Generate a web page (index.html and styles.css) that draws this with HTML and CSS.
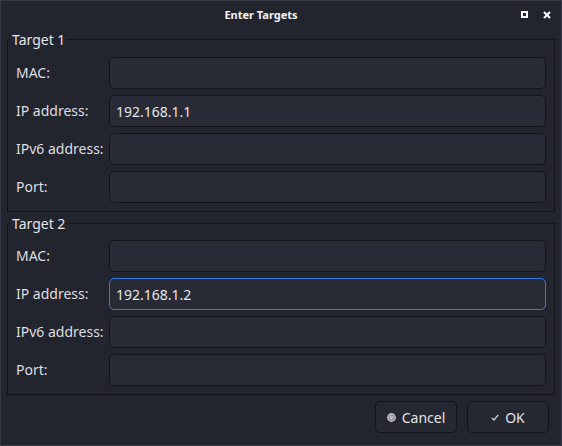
FILE: index.html
```html
<!DOCTYPE html>
<html>
<head>
<meta charset="utf-8">
<link rel="stylesheet" href="styles.css">
</head>
<body>
<div class="window">
  <div class="titlebar">
    <div class="title">Enter Targets</div>
    <div class="wm-buttons">
      <svg class="wm-icon" width="7" height="7" viewBox="0 0 7 7"><rect x="1" y="1" width="5" height="5" fill="none" stroke="#ffffff" stroke-width="2"/></svg>
      <svg class="wm-icon" width="8" height="8" viewBox="0 0 8 8"><path d="M1 1 L7 7 M7 1 L1 7" stroke="#ffffff" stroke-width="2" fill="none"/></svg>
    </div>
  </div>
  <fieldset class="group first">
    <legend class="group-title">Target 1</legend>
    <div class="form">
      <label class="label">MAC:</label><input class="field" value="">
      <label class="label">IP address:</label><input class="field" value="192.168.1.1">
      <label class="label">IPv6 address:</label><input class="field" value="">
      <label class="label">Port:</label><input class="field" value="">
    </div>
  </fieldset>
  <fieldset class="group second">
    <legend class="group-title">Target 2</legend>
    <div class="form">
      <label class="label">MAC:</label><input class="field" value="">
      <label class="label">IP address:</label><input class="field focus" value="192.168.1.2">
      <label class="label">IPv6 address:</label><input class="field" value="">
      <label class="label">Port:</label><input class="field" value="">
    </div>
  </fieldset>
  <div class="buttons">
    <button class="btn">
      <svg width="9" height="9" viewBox="0 0 9 9"><circle cx="4.5" cy="4.5" r="3.8" fill="#8c8e94" stroke="#c9cacd" stroke-width="1.2"/><circle cx="4.5" cy="4.5" r="2" fill="#b9babd"/></svg>
      <span>Cancel</span>
    </button>
    <button class="btn">
      <svg width="8" height="7" viewBox="0 0 8 7"><path d="M0.8 3.8 L3 6 L7.2 0.8" fill="none" stroke="#d8d8d8" stroke-width="1.2"/></svg>
      <span>OK</span>
    </button>
  </div>
</div>
</body>
</html>
```

FILE: styles.css
```css
html, body {
  margin: 0;
  padding: 0;
  background: #22242e;
}
.window {
  width: 562px;
  height: 446px;
  box-sizing: border-box;
  border: 1px solid #363945;
  background: #22242e;
  font-family: "Noto Sans", "DejaVu Sans", sans-serif;
  color: #dedfe2;
  display: flex;
  flex-direction: column;
}
.titlebar {
  height: 28px;
  display: flex;
  flex-shrink: 0;
}
.title {
  flex: 1;
  text-align: center;
  font-size: 11px;
  font-weight: bold;
  line-height: 28px;
  color: #f2f2f2;
}
.wm-buttons {
  display: flex;
  align-items: flex-start;
  gap: 15px;
  padding-top: 10px;
  padding-right: 10px;
}
.wm-icon {
  display: block;
}
.group {
  margin: 0 6px;
  padding: 0 8px 8px 8px;
  border: 1px solid #13141a;
  min-width: 0;
}
.group.second {
  margin-top: 1px;
}
.group-title {
  font-size: 14px;
  line-height: 21px;
  padding: 0 1px 0 2px;
  margin-left: -6px;
  color: #e4e5e8;
}
.form {
  display: grid;
  grid-template-columns: 93px 1fr;
  grid-auto-rows: 32px;
  row-gap: 6px;
  padding-top: 7px;
}
.group.second .form {
  padding-top: 6px;
}
.label {
  font-size: 14px;
  line-height: 32px;
  color: #dedfe2;
}
.field {
  box-sizing: border-box;
  height: 32px;
  margin: 0;
  border: 1px solid #14151b;
  border-radius: 5px;
  background: #282a36;
  color: #e6e7ea;
  font-family: "Noto Sans", "DejaVu Sans", sans-serif;
  font-size: 14px;
  padding: 0 6px;
  outline: none;
  min-width: 0;
}
.field.focus {
  border-color: #2f7de1;
}
.buttons {
  display: flex;
  justify-content: flex-end;
  gap: 10px;
  margin-top: 6px;
  padding-right: 12px;
}
.btn {
  width: 82px;
  height: 32px;
  box-sizing: border-box;
  border: 1px solid #14151b;
  border-radius: 5px;
  background: #252731;
  color: #e4e5e8;
  font-family: "Noto Sans", "DejaVu Sans", sans-serif;
  font-size: 14px;
  display: flex;
  align-items: center;
  justify-content: center;
  gap: 6px;
  padding: 0;
}
.btn svg {
  display: block;
}
```
